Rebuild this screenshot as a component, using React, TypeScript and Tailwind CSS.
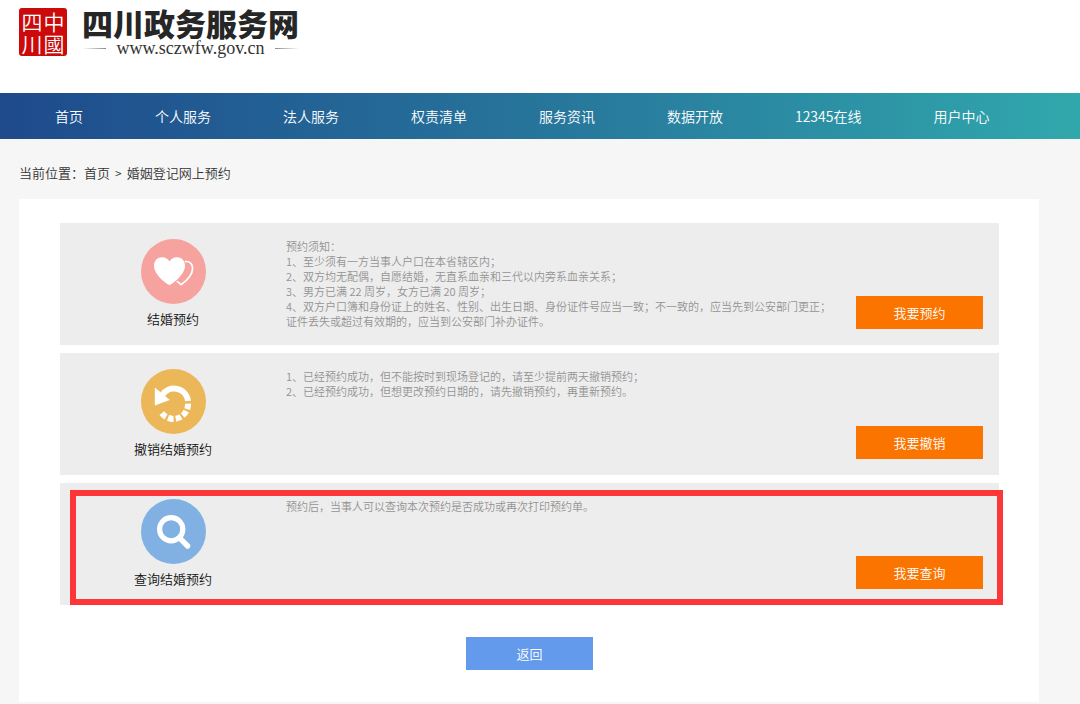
import type { ReactNode } from "react";

const navItems = [
  "首页",
  "个人服务",
  "法人服务",
  "权责清单",
  "服务资讯",
  "数据开放",
  "12345在线",
  "用户中心",
];

function HeartsIcon() {
  return (
    <svg viewBox="0 0 65 65" className="size-[65px]" aria-hidden="true">
      <circle cx="32.5" cy="32.5" r="32.5" fill="#f6a29e" />
      <path
        d="M44.5 22.6C48.5 22 51.6 25 51.6 29.2C51.6 35.5 46.5 41 40.2 45.6L36.4 42.6"
        fill="none"
        stroke="#fff"
        strokeWidth="1.7"
        strokeLinecap="round"
        strokeLinejoin="round"
      />
      <path
        d="M28.5 46.2C25.5 44.8 13 36 13 26.8C13 21.5 16.6 18.2 21 18.2C24.6 18.2 27 20 28.5 22.4C30 20 32.4 18.2 36 18.2C40.4 18.2 44 21.5 44 26.8C44 36 31.5 44.8 28.5 46.2Z"
        fill="#fff"
      />
    </svg>
  );
}

function UndoIcon() {
  return (
    <svg viewBox="0 0 65 65" className="size-[65px]" aria-hidden="true">
      <circle cx="32.5" cy="32.5" r="32.5" fill="#ecb758" />
      <path d="M21 26.5A14 14 0 0 1 47 32" fill="none" stroke="#fff" strokeWidth="6" />
      <path
        d="M47 34.6A14.6 14.6 0 0 1 18.6 40"
        fill="none"
        stroke="#fff"
        strokeWidth="6"
        strokeDasharray="5.6 2.2 5.6 2.2 5.6 2.2 5.6 2.2 5.6 30"
      />
      <path d="M13.8 18.6L28.8 31L13.8 36.6Z" fill="#fff" />
    </svg>
  );
}

function SearchIcon() {
  return (
    <svg viewBox="0 0 65 65" className="size-[65px]" aria-hidden="true">
      <circle cx="32.5" cy="32.5" r="32.5" fill="#81b1e3" />
      <circle cx="30.2" cy="30.2" r="11.6" fill="none" stroke="#fff" strokeWidth="5.2" />
      <path d="M38.8 39.2L46.6 47" stroke="#fff" strokeWidth="5.4" strokeLinecap="round" />
    </svg>
  );
}

type Service = {
  title: string;
  action: string;
  icon: ReactNode;
  notes: string[];
  highlighted?: boolean;
};

const services: Service[] = [
  {
    title: "结婚预约",
    action: "我要预约",
    icon: <HeartsIcon />,
    notes: [
      "预约须知：",
      "1、至少须有一方当事人户口在本省辖区内；",
      "2、双方均无配偶，自愿结婚，无直系血亲和三代以内旁系血亲关系；",
      "3、男方已满 22 周岁，女方已满 20 周岁；",
      "4、双方户口簿和身份证上的姓名、性别、出生日期、身份证件号应当一致；不一致的，应当先到公安部门更正；证件丢失或超过有效期的，应当到公安部门补办证件。",
    ],
  },
  {
    title: "撤销结婚预约",
    action: "我要撤销",
    icon: <UndoIcon />,
    notes: [
      "1、已经预约成功，但不能按时到现场登记的，请至少提前两天撤销预约；",
      "2、已经预约成功，但想更改预约日期的，请先撤销预约，再重新预约。",
    ],
  },
  {
    title: "查询结婚预约",
    action: "我要查询",
    icon: <SearchIcon />,
    notes: ["预约后，当事人可以查询本次预约是否成功或再次打印预约单。"],
    highlighted: true,
  },
];

function Header() {
  return (
    <header className="bg-white px-[19px] pt-2 pb-[37px]">
      <a href="#" className="flex h-12 w-fit gap-[15px]">
        <span className="grid size-12 shrink-0 grid-cols-2 place-items-center rounded-[3px] bg-[#cc0a0c] p-0.5 text-[21px] leading-[22px] text-white">
          <span>四</span>
          <span>中</span>
          <span>川</span>
          <span>國</span>
        </span>
        <span className="flex flex-col">
          <span className="text-[31px] leading-[30px] font-black text-[#262626]">四川政务服务网</span>
          <span className="flex items-center justify-between font-['Liberation_Serif',serif] text-lg leading-5 text-[#333]">
            <span className="h-px w-6 bg-linear-to-r from-transparent to-[#888]" />
            www.sczwfw.gov.cn
            <span className="h-px w-6 bg-linear-to-l from-transparent to-[#888]" />
          </span>
        </span>
      </a>
    </header>
  );
}

function ServiceCard({ service }: { service: Service }) {
  return (
    <section className="relative flex min-h-[122px] bg-[#ededed] py-4 pr-4">
      <div className="flex w-[226px] shrink-0 flex-col items-center gap-[5px]">
        {service.icon}
        <h2 className="text-[13px] leading-5 text-[#111]">{service.title}</h2>
      </div>
      <div className="mr-5 flex-1 text-[11px] leading-[15px] text-[#939393]">
        {service.notes.map((note) => (
          <p key={note}>{note}</p>
        ))}
      </div>
      <button
        type="button"
        className="h-[33px] w-[127px] shrink-0 self-end bg-[#fb7400] text-[13px] text-white"
      >
        {service.action}
      </button>
      {service.highlighted && (
        <div className="pointer-events-none absolute top-[7px] -right-1 bottom-0 left-2.5 border-6 border-[#fd3737]" />
      )}
    </section>
  );
}

export default function App() {
  return (
    <div className="min-h-screen bg-[#f6f6f6] font-['Noto_Sans_CJK_SC',sans-serif] font-[350]">
      <Header />
      <nav className="flex h-[46px] items-center gap-[72px] bg-linear-to-r from-[#1f4a8c] via-[#27759b] to-[#31a8ac] px-[55px] text-sm whitespace-nowrap text-white">
        {navItems.map((item) => (
          <a key={item} href="#">
            {item}
          </a>
        ))}
      </nav>
      <main className="pr-[41px] pb-0.5 pl-[19px]">
        <div className="flex h-[60px] items-center pt-2 text-[13px] text-[#333]">
          <span>当前位置：</span>
          <a href="#">首页</a>
          <span className="px-[5px] text-xs">&gt;</span>
          <span>婚姻登记网上预约</span>
        </div>
        <div className="flex flex-col bg-white pt-6 pr-10 pb-8 pl-[41px]">
          <div className="flex flex-col gap-2">
            {services.map((service) => (
              <ServiceCard key={service.title} service={service} />
            ))}
          </div>
          <button
            type="button"
            className="mt-8 h-[33px] w-[127px] self-center bg-[#639aec] text-[13px] text-white"
          >
            返回
          </button>
        </div>
      </main>
    </div>
  );
}
